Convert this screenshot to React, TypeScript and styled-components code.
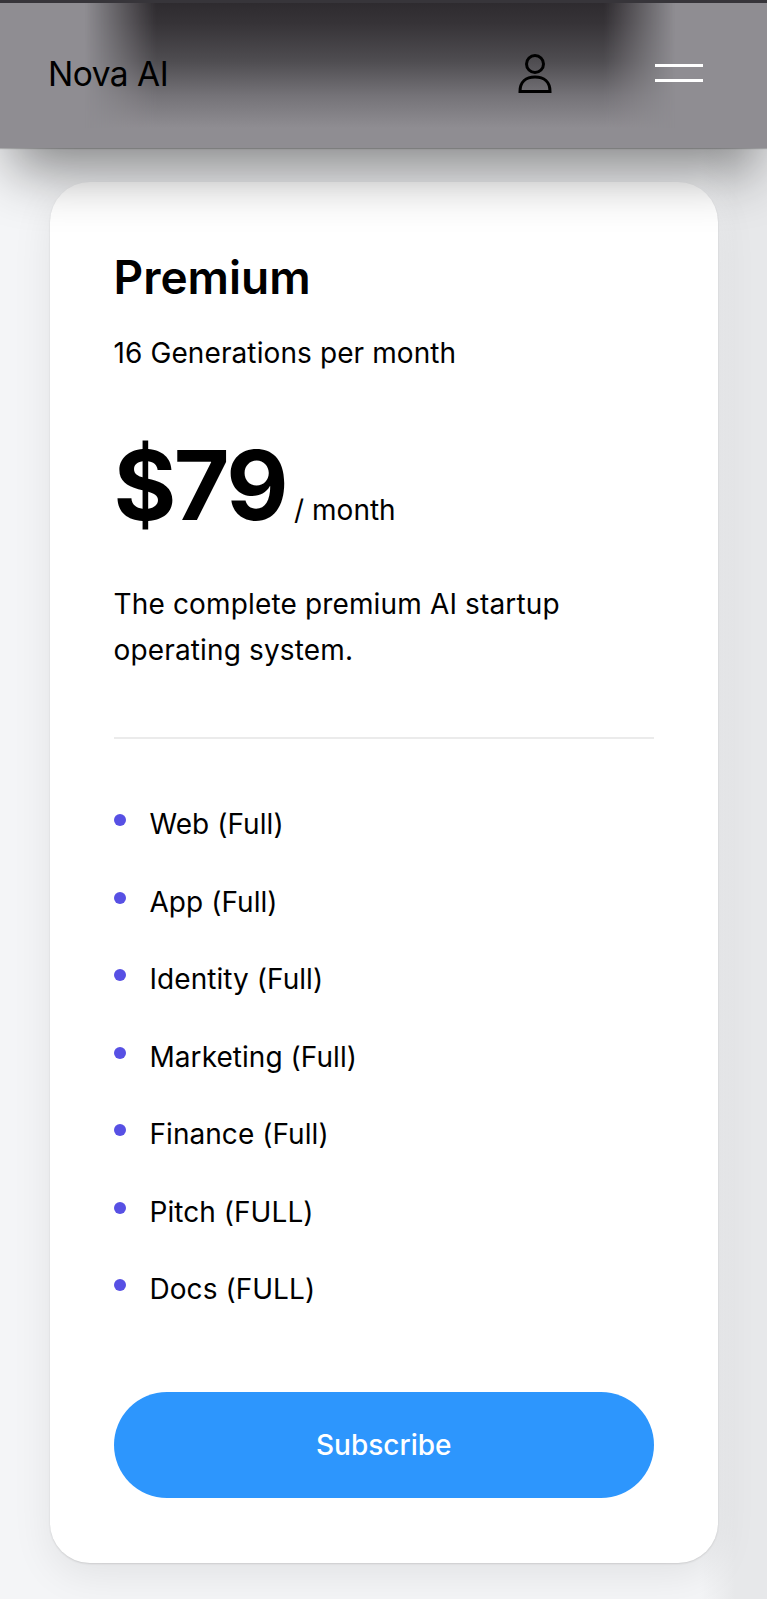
import styled, { createGlobalStyle } from "styled-components";

const features = [
    "Web (Full)",
    "App (Full)",
    "Identity (Full)",
    "Marketing (Full)",
    "Finance (Full)",
    "Pitch (FULL)",
    "Docs (FULL)",
];

export default function App() {
    return (
        <Page>
            <GlobalStyle/>
            <Header>
                <TopStrip/>
                <HeaderGlow/>
                <Logo>Nova AI</Logo>
                <HeaderActions>
                    <svg width="36" height="44" viewBox="0 0 36 44" fill="none" stroke="#000000" strokeWidth="3">
                        <circle cx="18" cy="12" r="8.5"/>
                        <path d="M3 39.5 C3 30 9 25 18 25 C27 25 33 30 33 39.5 Z"/>
                    </svg>
                    <MenuButton>
                        <MenuLine/>
                        <MenuLine/>
                    </MenuButton>
                </HeaderActions>
            </Header>
            <Main>
                <Card>
                    <PlanName>Premium</PlanName>
                    <Quota>16 Generations per month</Quota>
                    <PriceRow>
                        <Price>$79</Price>
                        <Period>/ month</Period>
                    </PriceRow>
                    <Description>The complete premium AI startup operating system.</Description>
                    <Divider/>
                    <FeatureList>
                        {features.map((feature) => (
                            <Feature key={feature}>{feature}</Feature>
                        ))}
                    </FeatureList>
                    <SubscribeButton>Subscribe</SubscribeButton>
                </Card>
            </Main>
        </Page>
    );
}

const GlobalStyle = createGlobalStyle`
    html, body {
        margin: 0;
        padding: 0;
        overflow: hidden;
        background: #f3f4f6;
    }
    * {
        box-sizing: border-box;
    }
`

const Page = styled.div`
    width: 767px;
    height: 1599px;
    overflow: hidden;
    font-family: Inter, "Liberation Sans", sans-serif;
    color: #000000;
    background: linear-gradient(to right, #f4f5f7 0, #f4f5f7 700px, #e7e8ea 735px, #e7e8ea 100%);
`

const Header = styled.header`
    position: relative;
    z-index: 2;
    height: 148px;
    padding: 0 64px 0 48px;
    display: flex;
    align-items: center;
    justify-content: space-between;
    background: #8f8d92;
    box-shadow: 0 34px 56px -12px rgba(0, 0, 0, 0.46), 0 1px 1px rgba(0, 0, 0, 0.2);
`

const TopStrip = styled.div`
    position: absolute;
    top: 0;
    left: 0;
    right: 0;
    height: 3px;
    z-index: 1;
    background: #37353a;
`

const HeaderGlow = styled.div`
    position: absolute;
    top: 0;
    left: 85px;
    width: 590px;
    height: 128px;
    background: linear-gradient(to bottom, #2d2a2e 0%, #363337 18%, #4f4d51 48%, #757378 75%, #8f8d92 100%);
    -webkit-mask-image: linear-gradient(to right, transparent 0, rgba(0, 0, 0, 0.5) 6%, #000 12%, #000 88%, rgba(0, 0, 0, 0.5) 94%, transparent 100%);
    mask-image: linear-gradient(to right, transparent 0, rgba(0, 0, 0, 0.5) 6%, #000 12%, #000 88%, rgba(0, 0, 0, 0.5) 94%, transparent 100%);
`

const Logo = styled.div`
    position: relative;
    font-size: 33.5px;
    letter-spacing: -0.5px;
    color: #000000;
`

const HeaderActions = styled.div`
    position: relative;
    display: flex;
    align-items: center;
    gap: 102px;
`

const MenuButton = styled.div`
    display: flex;
    flex-direction: column;
    gap: 12px;
    transform: translateY(-1px);
`

const MenuLine = styled.span`
    display: block;
    width: 48px;
    height: 3px;
    background: #ffffff;
`

const Main = styled.main`
    padding: 34px 49px 36px 50px;
`

const Card = styled.section`
    height: 1381px;
    padding: 67px 64px 0 63.5px;
    background: #ffffff;
    border-radius: 40px;
    box-shadow: 0 12px 40px rgba(0, 0, 0, 0.08), 0 1px 2px rgba(0, 0, 0, 0.12);
`

const PlanName = styled.h2`
    margin: 0;
    font-size: 46px;
    line-height: 56px;
    font-weight: 600;
`

const Quota = styled.p`
    margin: 30px 0 0;
    font-size: 28px;
    line-height: 36px;
    letter-spacing: 0.1px;
`

const PriceRow = styled.div`
    display: flex;
    align-items: baseline;
    margin-top: 55px;
`

const Price = styled.span`
    font-size: 96px;
    line-height: 118px;
    font-weight: 700;
    letter-spacing: -2.5px;
`

const Period = styled.span`
    margin-left: 8px;
    font-size: 28px;
`

const Description = styled.p`
    margin: 37px 0 0;
    font-size: 28px;
    line-height: 46px;
    letter-spacing: 0.15px;
`

const Divider = styled.hr`
    margin: 64px 0 0;
    border: 0;
    height: 2px;
    background: #ebebeb;
`

const FeatureList = styled.ul`
    margin: 67px 0 0;
    padding: 0;
    list-style: none;
    display: flex;
    flex-direction: column;
    gap: 41.5px;
`

const Feature = styled.li`
    position: relative;
    padding-left: 36px;
    font-size: 28px;
    line-height: 36px;
    letter-spacing: 0.05px;

    &::before {
        content: "";
        position: absolute;
        left: 0;
        top: 8px;
        width: 12px;
        height: 12px;
        border-radius: 50%;
        background: #5750e4;
    }
`

const SubscribeButton = styled.button`
    display: block;
    width: 100%;
    height: 106px;
    margin-top: 85px;
    border: 0;
    border-radius: 53px;
    background: #2d96fd;
    color: #ffffff;
    font-family: inherit;
    font-size: 28px;
    font-weight: 500;
`
